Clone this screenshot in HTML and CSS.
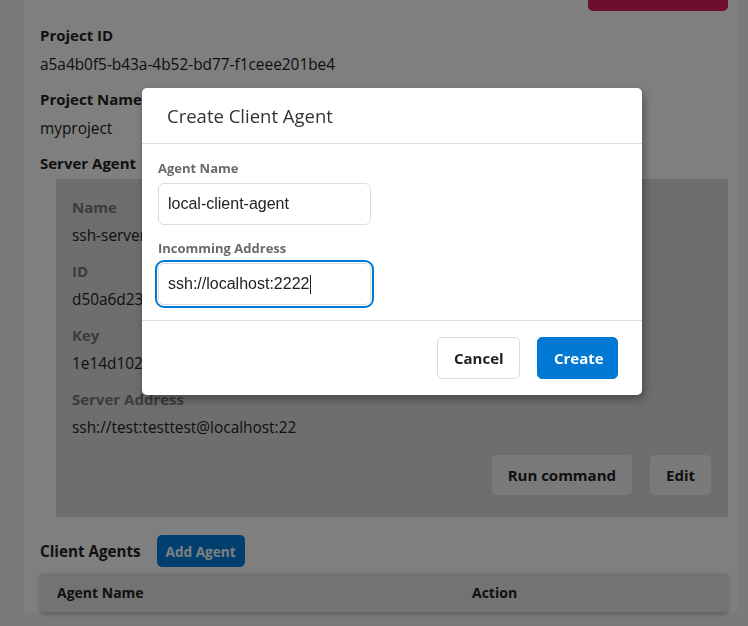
FILE: index.html
```html
<!DOCTYPE html>
<html lang="en">
<head>
<meta charset="utf-8">
<title>Project</title>
<link rel="stylesheet" href="styles.css">
</head>
<body>
<div class="page">
  <div class="topbar"><button class="btn-danger" aria-label="Delete Project"></button></div>

  <div class="field-label">Project ID</div>
  <div class="field-value">a5a4b0f5-b43a-4b52-bd77-f1ceee201be4</div>
  <div class="field-label">Project Name</div>
  <div class="field-value">myproject</div>
  <div class="field-label">Server Agent</div>

  <div class="server-box">
    <div class="box-label">Name</div>
    <div class="box-value">ssh-server-agent</div>
    <div class="box-label">ID</div>
    <div class="box-value">d50a6d23-7c1e-4e5b-9a1f-3b2c4d5e6f70</div>
    <div class="box-label">Key</div>
    <div class="box-value">1e14d102-3f4a-4b6c-8d9e-0a1b2c3d4e5f</div>
    <div class="box-label">Server Address</div>
    <div class="box-value">ssh://test:testtest@localhost:22</div>
    <div class="box-actions">
      <button class="btn-light">Run command</button>
      <button class="btn-light">Edit</button>
    </div>
  </div>

  <div class="client-head">
    <span class="client-title">Client Agents</span>
    <button class="btn-add">Add Agent</button>
  </div>
  <div class="table">
    <div class="th th-name">Agent Name</div>
    <div class="th th-action">Action</div>
  </div>
</div>

<div class="overlay"></div>

<div class="modal">
  <div class="modal-header">Create Client Agent</div>
  <div class="modal-body">
    <label class="m-label">Agent Name</label>
    <div class="m-input">local-client-agent</div>
    <label class="m-label">Incomming Address</label>
    <div class="m-input focused">ssh://localhost:2222<span class="caret"></span></div>
  </div>
  <div class="modal-footer">
    <button class="btn-cancel">Cancel</button>
    <button class="btn-create">Create</button>
  </div>
</div>
</body>
</html>
```

FILE: styles.css
```css
* { box-sizing: border-box; }
html, body { margin: 0; padding: 0; }
body {
  background: #f4f4f4;
  font-family: "Open Sans", "Noto Sans", sans-serif;
  color: #222;
  width: 748px;
  height: 626px;
  overflow: hidden;
}
button { font-family: inherit; }

.page {
  margin-left: 24px;
  width: 713px;
  min-height: 626px;
  background: #fff;
  padding: 0 9px 0 16px;
}
.topbar {
  display: flex;
  justify-content: flex-end;
  margin-top: -29px;
  margin-bottom: 12px;
}
.btn-danger {
  width: 140px;
  height: 40px;
  border: none;
  border-radius: 5px;
  background: #dc1c5c;
}

.field-label {
  font-weight: 700;
  font-size: 15px;
  line-height: 24px;
  color: #222;
  margin-bottom: 6px;
}
.field-value {
  font-size: 15.4px;
  line-height: 24px;
  color: #222;
  margin-bottom: 10px;
}

.server-box {
  margin-left: 16px;
  margin-top: -2px;
  background: #dcdcdc;
  padding: 16px 17px 22px 16px;
}
.box-label {
  font-weight: 700;
  font-size: 15px;
  line-height: 24px;
  color: #777;
  margin-bottom: 5px;
}
.box-value {
  font-size: 15.4px;
  line-height: 24px;
  color: #222;
  margin-bottom: 11px;
}
.box-actions {
  display: flex;
  justify-content: flex-end;
  gap: 18px;
  margin-top: 15px;
}
.btn-light {
  height: 40px;
  padding: 0 16px;
  border: none;
  border-radius: 5px;
  background: #f4f4f4;
  color: #222;
  font-weight: 700;
  font-size: 15px;
}

.client-head {
  display: flex;
  align-items: center;
  gap: 16px;
  margin-top: 18px;
  height: 32px;
}
.client-title {
  font-weight: 700;
  font-size: 15.2px;
  color: #222;
}
.btn-add {
  height: 32px;
  padding: 0 9px;
  border: none;
  border-radius: 5px;
  background: #007edc;
  color: #fff;
  font-weight: 700;
  font-size: 13.6px;
}

.table {
  margin-top: 6px;
  display: grid;
  grid-template-columns: 415px 1fr;
  height: 39px;
  align-items: center;
  background: #e6e6e6;
  border-radius: 4px;
  box-shadow: 0 2px 4px rgba(0,0,0,0.25);
}
.th {
  font-weight: 700;
  font-size: 14px;
  color: #222;
  padding-left: 17px;
}

.overlay {
  position: fixed;
  inset: 0;
  background: rgba(0,0,0,0.5);
}

.modal {
  position: fixed;
  left: 142px;
  top: 88px;
  width: 500px;
  background: #fff;
  border-radius: 5px;
  box-shadow: 2px 4px 10px rgba(0,0,0,0.35);
}
.modal-header {
  height: 56px;
  padding: 0 25px;
  display: flex;
  align-items: center;
  font-size: 18.5px;
  font-weight: 400;
  color: #333;
  border-bottom: 1px solid #dedede;
}
.modal-body {
  padding: 15px 16px 15px 16px;
  display: flex;
  flex-direction: column;
  align-items: flex-start;
  border-bottom: 1px solid #dedede;
}
.m-label {
  font-weight: 700;
  font-size: 13px;
  line-height: 18px;
  color: #6b6a66;
  margin-bottom: 6px;
}
.m-input {
  width: 213px;
  height: 42px;
  border: 1px solid #dcdcdc;
  border-radius: 6px;
  padding: 0 9px;
  display: flex;
  align-items: center;
  font-family: "Liberation Sans", Arial, sans-serif;
  font-size: 16px;
  color: #222;
  margin-bottom: 14px;
}
.m-input.focused {
  outline: 2px solid #0078d4;
  outline-offset: 1px;
  margin-bottom: 0;
}
.caret {
  display: inline-block;
  width: 1px;
  height: 19px;
  background: #222;
  margin-left: 1px;
}
.modal-footer {
  display: flex;
  justify-content: flex-end;
  gap: 17px;
  padding: 16px 24px 16px 24px;
}
.btn-cancel, .btn-create {
  height: 42px;
  border-radius: 5px;
  font-weight: 700;
  font-size: 15px;
  padding: 0 16px;
}
.btn-cancel {
  width: 83px;
  background: #fff;
  border: 1px solid #dcdcdc;
  color: #222;
}
.btn-create {
  width: 81px;
  background: #0078d4;
  border: 1px solid #0078d4;
  color: #fff;
}
```
